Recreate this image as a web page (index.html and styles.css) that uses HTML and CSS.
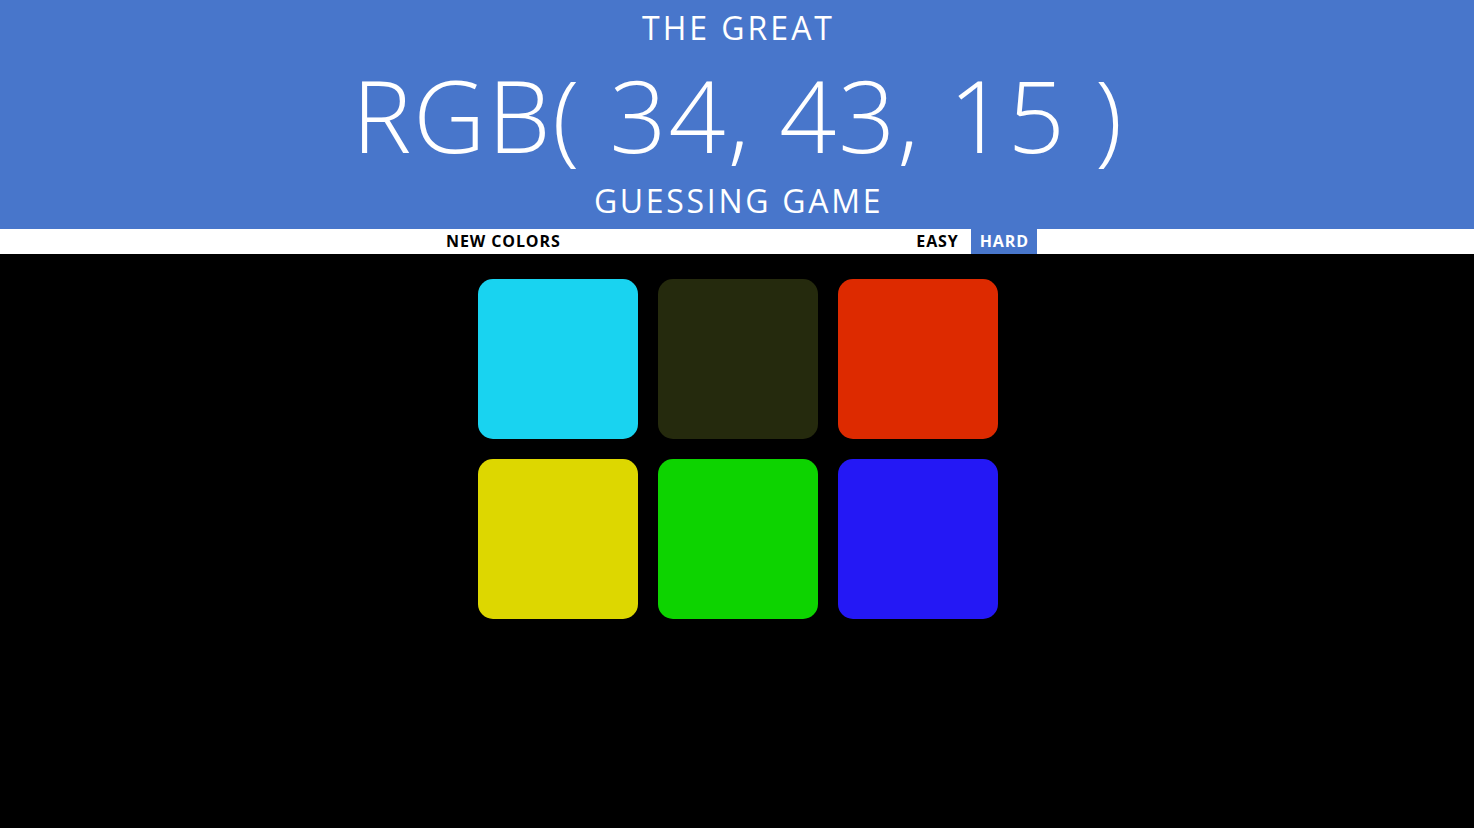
FILE: index.html
```html
<!DOCTYPE html>
<html>
<head>
<meta charset="utf-8">
<title>Color Game</title>
<link rel="stylesheet" href="styles.css">
</head>
<body>
<header class="banner">
  <div class="banner-small">THE GREAT</div>
  <div class="banner-big">RGB( 34, 43, 15 )</div>
  <div class="banner-small banner-bottom">GUESSING GAME</div>
</header>
<nav class="stripe">
  <div class="stripe-inner">
    <button class="btn">NEW COLORS</button>
    <div class="modes">
      <button class="btn">EASY</button>
      <button class="btn selected">HARD</button>
    </div>
  </div>
</nav>
<main class="board">
  <div class="square" style="background:#19d3f0"></div>
  <div class="square" style="background:#252a0d"></div>
  <div class="square" style="background:#dd2a00"></div>
  <div class="square" style="background:#ddd700"></div>
  <div class="square" style="background:#0dd300"></div>
  <div class="square" style="background:#2418f5"></div>
</main>
</body>
</html>
```
FILE: styles.css
```css
html, body {
  margin: 0;
  padding: 0;
  background: #000;
  height: 100%;
}
body {
  font-family: "Open Sans", "Liberation Sans", sans-serif;
  color: #fff;
}
.banner {
  background: #4876cb;
  height: 229px;
  display: flex;
  flex-direction: column;
  align-items: center;
  text-align: center;
}
.banner-small {
  font-size: 32px;
  letter-spacing: 3px;
  line-height: 56px;
  font-weight: 400;
  padding-left: 3px;
}
.banner-big {
  font-size: 100px;
  line-height: 116px;
  font-weight: 300;
  letter-spacing: 2px;
  padding-left: 2px;
}
.banner-bottom {
  line-height: 57px;
  letter-spacing: 2.7px;
}
.stripe {
  background: #fff;
  height: 25px;
}
.stripe-inner {
  width: 600px;
  margin: 0 auto;
  height: 100%;
  display: flex;
  justify-content: space-between;
  align-items: stretch;
}
.modes {
  display: flex;
  gap: 4px;
}
.btn {
  border: none;
  background: transparent;
  font-family: "Open Sans", "Liberation Sans", sans-serif;
  font-weight: 700;
  font-size: 16px;
  letter-spacing: 0.9px;
  color: #000;
  padding: 0 8px 0 9px;
  margin: 0;
  height: 25px;
  line-height: 25px;
}
.btn.selected {
  background: #4876cb;
  color: #fff;
}
.board {
  width: 540px;
  margin: 15px auto 0;
  padding-left: 2px;
  display: flex;
  flex-wrap: wrap;
}
.square {
  width: 160px;
  height: 160px;
  margin: 10px;
  border-radius: 15px;
}
```
